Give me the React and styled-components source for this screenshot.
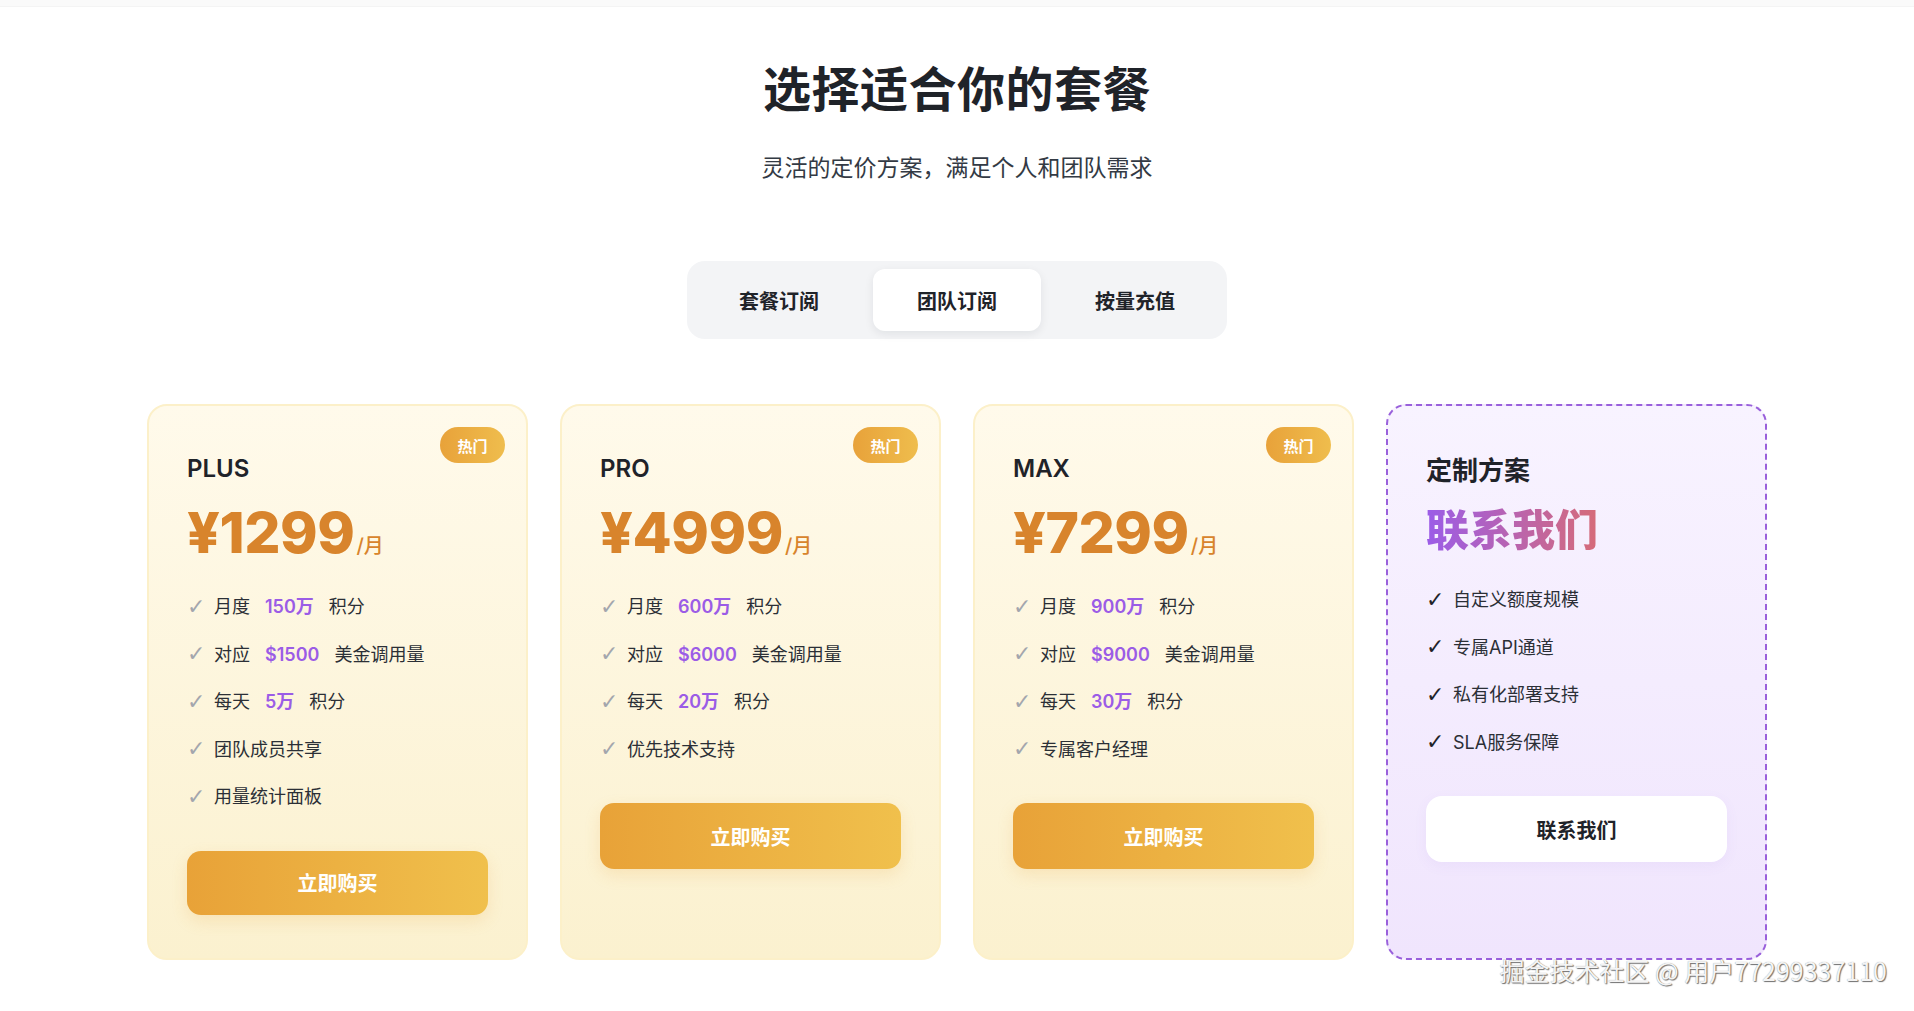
import React, { useState } from 'react';
import styled, { createGlobalStyle, css } from 'styled-components';

const GlobalStyle = createGlobalStyle`
  html, body {
    margin: 0;
    padding: 0;
    background: #ffffff;
  }
  body {
    font-family: Inter, "Noto Sans CJK SC", "Noto Sans", sans-serif;
    color: #1f2329;
  }
  * {
    box-sizing: border-box;
  }
`;

const Page = styled.div`
  position: relative;
  min-height: 1011px;
  overflow: hidden;
`;

const TopBar = styled.div`
  height: 7px;
  background: #fafafa;
  border-bottom: 1px solid #f4f4f4;
`;

const Hero = styled.header`
  display: flex;
  flex-direction: column;
  align-items: center;
  padding-top: 54px;
`;

const Title = styled.h1`
  margin: 0;
  font-size: 48px;
  line-height: 1.2;
  font-weight: 700;
  color: #1f2329;
  letter-spacing: 0.5px;
`;

const Subtitle = styled.p`
  margin: 32px 0 0;
  font-size: 23px;
  line-height: 1.5;
  color: #333a44;
`;

const Tabs = styled.div`
  margin-top: 76px;
  display: flex;
  gap: 10px;
  padding: 8px;
  border-radius: 18px;
  background: #f3f4f6;
`;

const Tab = styled.button`
  width: 168px;
  height: 62px;
  border: 0;
  border-radius: 12px;
  background: transparent;
  font-family: inherit;
  font-size: 20px;
  font-weight: 700;
  color: #1f2329;
  cursor: pointer;

  ${(p) =>
    p.$active &&
    css`
      background: #ffffff;
      box-shadow: 0 3px 10px rgba(15, 23, 42, 0.08);
    `}
`;

const Grid = styled.section`
  width: 1620px;
  margin: 65px auto 0;
  display: grid;
  grid-template-columns: repeat(4, 1fr);
  gap: 32px;
`;

const Card = styled.div`
  position: relative;
  display: flex;
  flex-direction: column;
  height: 556px;
  padding: 48px 38px 43px;
  border-radius: 20px;
  border: 2px solid #fcf0c9;
  background: linear-gradient(180deg, #fffaeb 0%, #fbf1cf 100%);

  ${(p) =>
    p.$custom &&
    css`
      border: 2px dashed #9960db;
      background: linear-gradient(180deg, #f8f3ff 0%, #f0e5fd 100%);
    `}
`;

const Badge = styled.span`
  position: absolute;
  top: 21px;
  right: 21px;
  width: 65px;
  height: 36px;
  display: flex;
  align-items: center;
  justify-content: center;
  border-radius: 18px;
  background: linear-gradient(90deg, #e8a23a 0%, #efbd4d 100%);
  color: #ffffff;
  font-size: 15px;
  font-weight: 700;
`;

const PlanName = styled.div`
  font-size: ${(p) => (p.$custom ? '26px' : '24px')};
  line-height: ${(p) => (p.$custom ? '34px' : '29px')};
  font-weight: ${(p) => (p.$custom ? 700 : 600)};
  color: #1f2329;
`;

const Price = styled.div`
  margin-top: 19px;
  display: flex;
  align-items: baseline;
  color: #d8842c;
  height: 62px;
`;

const Amount = styled.span`
  font-size: 57px;
  line-height: 62px;
  font-weight: 800;
  letter-spacing: -0.5px;
`;

const Per = styled.span`
  margin-left: 2px;
  font-size: 20px;
  font-weight: 500;
`;

const Contact = styled.div`
  margin-top: 16px;
  font-size: 43px;
  line-height: 53px;
  font-weight: 900;
  background: linear-gradient(90deg, #9b5ce8 0%, #d66b78 100%);
  -webkit-background-clip: text;
  background-clip: text;
  color: transparent;
  align-self: flex-start;
`;

const Features = styled.ul`
  list-style: none;
  margin: 19px 0 0;
  padding: 0;
`;

const Feature = styled.li`
  display: flex;
  align-items: center;
  gap: 11px;
  padding: 10px 0;
  font-size: 18px;
  line-height: 27.5px;
  color: #2b2f36;
`;

const Check = styled.span`
  width: 16px;
  font-family: "DejaVu Sans", sans-serif;
  font-size: 22px;
  line-height: 1;
  color: ${(p) => (p.$dark ? '#1f2329' : '#a3a6ad')};
`;

const Hl = styled.span`
  margin: 0 15px;
  color: #9b5ce6;
  font-weight: 600;
`;

const BuyButton = styled.button`
  margin-top: 30px;
  width: 100%;
  height: 66px;
  border: 0;
  border-radius: 14px;
  font-family: inherit;
  font-size: 20px;
  font-weight: 700;
  cursor: pointer;
  color: #ffffff;
  background: linear-gradient(90deg, #e8a238 0%, #f0c04c 100%);
  box-shadow: 0 6px 16px rgba(232, 162, 56, 0.18);

  ${(p) =>
    p.$light &&
    css`
      color: #1f2329;
      background: #ffffff;
      border-radius: 16px;
      box-shadow: 0 4px 14px rgba(120, 80, 200, 0.06);
    `}
`;

const Watermark = styled.div`
  position: absolute;
  top: 955px;
  right: 27px;
  font-family: "Noto Sans CJK SC", sans-serif;
  font-size: 25px;
  line-height: 30px;
  font-weight: 400;
  color: #f4f4f4;
  text-shadow: 1px 1px 1px rgba(0, 0, 0, 0.55), 0 0 1px rgba(0, 0, 0, 0.4);
  white-space: nowrap;
`;

const plans = [
  {
    name: 'PLUS',
    price: '¥1299',
    month: '150万',
    usd: '$1500',
    day: '5万',
    extras: ['团队成员共享', '用量统计面板'],
  },
  {
    name: 'PRO',
    price: '¥4999',
    month: '600万',
    usd: '$6000',
    day: '20万',
    extras: ['优先技术支持'],
  },
  {
    name: 'MAX',
    price: '¥7299',
    month: '900万',
    usd: '$9000',
    day: '30万',
    extras: ['专属客户经理'],
  },
];

const customItems = ['自定义额度规模', '专属API通道', '私有化部署支持', 'SLA服务保障'];

const tabs = ['套餐订阅', '团队订阅', '按量充值'];

const PlanCard = ({ plan }) => (
  <Card>
    <Badge>热门</Badge>
    <PlanName>{plan.name}</PlanName>
    <Price>
      <Amount>{plan.price}</Amount>
      <Per>/月</Per>
    </Price>
    <Features>
      <Feature>
        <Check>✓</Check>
        <span>
          {'月度'}
          <Hl>{plan.month}</Hl>
          {'积分'}
        </span>
      </Feature>
      <Feature>
        <Check>✓</Check>
        <span>
          {'对应'}
          <Hl>{plan.usd}</Hl>
          {'美金调用量'}
        </span>
      </Feature>
      <Feature>
        <Check>✓</Check>
        <span>
          {'每天'}
          <Hl>{plan.day}</Hl>
          {'积分'}
        </span>
      </Feature>
      {plan.extras.map((e) => (
        <Feature key={e}>
          <Check>✓</Check>
          <span>{e}</span>
        </Feature>
      ))}
    </Features>
    <BuyButton>立即购买</BuyButton>
  </Card>
);

const App = () => {
  const [active, setActive] = useState(1);

  return (
    <Page>
      <GlobalStyle />
      <TopBar />
      <Hero>
        <Title>选择适合你的套餐</Title>
        <Subtitle>灵活的定价方案，满足个人和团队需求</Subtitle>
        <Tabs>
          {tabs.map((t, i) => (
            <Tab key={t} $active={i === active} onClick={() => setActive(i)}>
              {t}
            </Tab>
          ))}
        </Tabs>
      </Hero>

      <Grid>
        {plans.map((p) => (
          <PlanCard key={p.name} plan={p} />
        ))}
        <Card $custom>
          <PlanName $custom>定制方案</PlanName>
          <Contact>联系我们</Contact>
          <Features>
            {customItems.map((c) => (
              <Feature key={c}>
                <Check $dark>✓</Check>
                <span>{c}</span>
              </Feature>
            ))}
          </Features>
          <BuyButton $light>联系我们</BuyButton>
        </Card>
      </Grid>

      <Watermark>掘金技术社区 @ 用户77299337110</Watermark>
    </Page>
  );
};

export default App;
